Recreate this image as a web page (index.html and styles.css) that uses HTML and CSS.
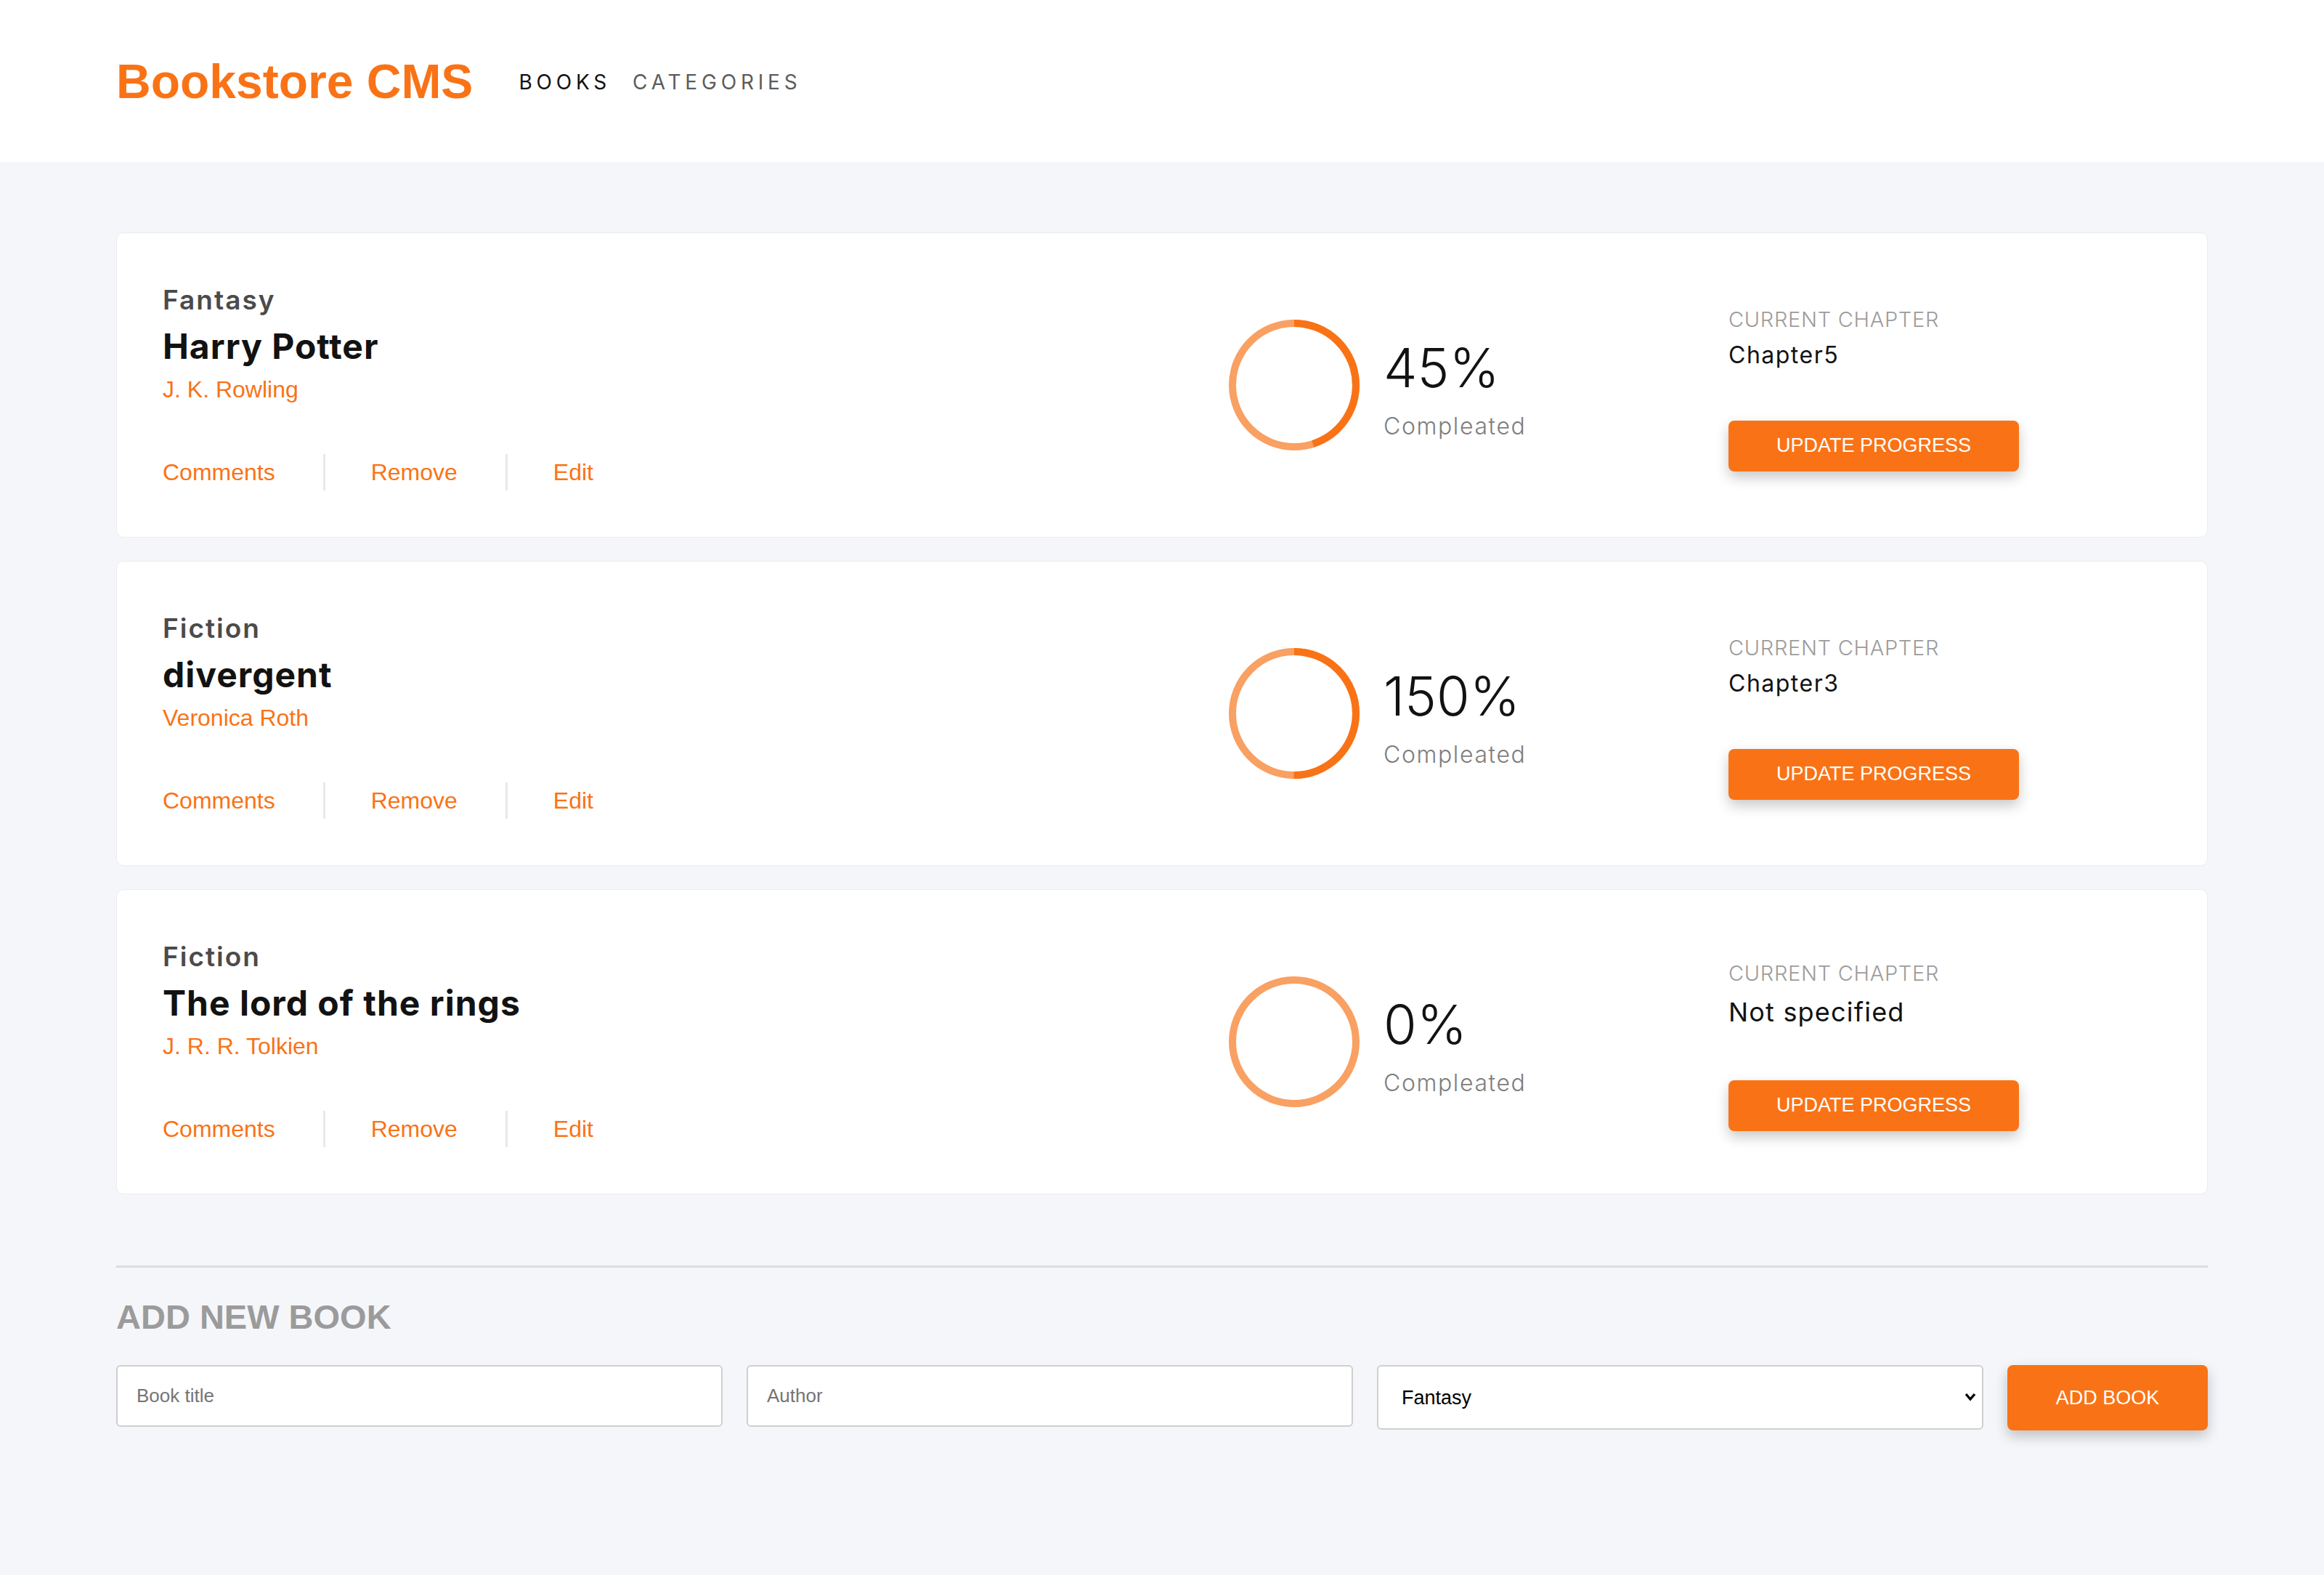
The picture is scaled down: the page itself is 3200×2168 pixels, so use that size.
FILE: index.html
```html
<!DOCTYPE html>
<html lang="en">
<head>
<meta charset="utf-8">
<title>Bookstore CMS</title>
<link rel="stylesheet" href="styles.css">
</head>
<body>
<header class="header">
  <div class="logo">Bookstore CMS</div>
  <nav class="nav">
    <a class="nav-link active">BOOKS</a>
    <a class="nav-link">CATEGORIES</a>
  </nav>
</header>
<main class="main">
  <ul class="books">
    <li class="card">
      <div class="info">
        <div class="category">Fantasy</div>
        <div class="title">Harry Potter</div>
        <div class="author">J. K. Rowling</div>
        <div class="actions">
          <a class="action">Comments</a>
          <a class="action">Remove</a>
          <a class="action">Edit</a>
        </div>
      </div>
      <div class="progress">
        <svg class="ring" width="180" height="180" viewBox="0 0 180 180">
          <circle class="ring-bg" cx="90" cy="90" r="85"/>
          <circle class="ring-fg" cx="90" cy="90" r="85" stroke-dasharray="240.33 534.07"/>
        </svg>
        <div class="pct">
          <div class="pct-value">45%</div>
          <div class="pct-label">Compleated</div>
        </div>
      </div>
      <div class="chapter">
        <div class="chapter-label">CURRENT CHAPTER</div>
        <div class="chapter-value">Chapter5</div>
        <button class="btn update">UPDATE PROGRESS</button>
      </div>
    </li>
    <li class="card">
      <div class="info">
        <div class="category">Fiction</div>
        <div class="title">divergent</div>
        <div class="author">Veronica Roth</div>
        <div class="actions">
          <a class="action">Comments</a>
          <a class="action">Remove</a>
          <a class="action">Edit</a>
        </div>
      </div>
      <div class="progress">
        <svg class="ring" width="180" height="180" viewBox="0 0 180 180">
          <circle class="ring-bg" cx="90" cy="90" r="85"/>
          <circle class="ring-fg" cx="90" cy="90" r="85" stroke-dasharray="267.04 534.07"/>
        </svg>
        <div class="pct">
          <div class="pct-value">150%</div>
          <div class="pct-label">Compleated</div>
        </div>
      </div>
      <div class="chapter">
        <div class="chapter-label">CURRENT CHAPTER</div>
        <div class="chapter-value">Chapter3</div>
        <button class="btn update">UPDATE PROGRESS</button>
      </div>
    </li>
    <li class="card">
      <div class="info">
        <div class="category">Fiction</div>
        <div class="title">The lord of the rings</div>
        <div class="author">J. R. R. Tolkien</div>
        <div class="actions">
          <a class="action">Comments</a>
          <a class="action">Remove</a>
          <a class="action">Edit</a>
        </div>
      </div>
      <div class="progress">
        <svg class="ring" width="180" height="180" viewBox="0 0 180 180">
          <circle class="ring-bg" cx="90" cy="90" r="85"/>
        </svg>
        <div class="pct">
          <div class="pct-value">0%</div>
          <div class="pct-label">Compleated</div>
        </div>
      </div>
      <div class="chapter">
        <div class="chapter-label">CURRENT CHAPTER</div>
        <div class="chapter-value big">Not specified</div>
        <button class="btn update">UPDATE PROGRESS</button>
      </div>
    </li>
  </ul>
  <section class="add">
    <h2 class="add-title">ADD NEW BOOK</h2>
    <form class="add-form">
      <input class="field" type="text" placeholder="Book title">
      <input class="field" type="text" placeholder="Author">
      <div class="select-wrap">
        <select class="field select">
          <option>Fantasy</option>
          <option>Fiction</option>
        </select>
        <svg class="chevron" width="16" height="12" viewBox="0 0 16 12">
          <path d="M2 2 L8 9 L14 2" fill="none" stroke="#000" stroke-width="3.4" stroke-linejoin="miter"/>
        </svg>
      </div>
      <button class="btn add-btn" type="button">ADD BOOK</button>
    </form>
  </section>
</main>
</body>
</html>
```
FILE: styles.css
```css
* { box-sizing: border-box; }

html, body {
  margin: 0;
  padding: 0;
}

body {
  background: #f5f6fa;
  font-family: "Inter", "Liberation Sans", sans-serif;
  color: #121212;
  min-height: 2168px;
}

.header {
  height: 223px;
  background: #ffffff;
  display: flex;
  align-items: center;
  padding: 0 160px;
  gap: 63px;
}

.logo {
  font-family: "Liberation Sans", Arial, sans-serif;
  font-weight: 700;
  font-size: 66px;
  line-height: 72px;
  color: #f97316;
}

.nav {
  display: flex;
  gap: 30px;
  margin-top: 3px;
}

.nav-link {
  font-family: "Inter", sans-serif;
  font-size: 28px;
  line-height: 36px;
  letter-spacing: 5.8px;
  color: #5c5c5c;
  font-weight: 400;
}

.nav-link.active { color: #121212; }

.main {
  padding: 97px 160px 0;
}

.books {
  list-style: none;
  margin: 0;
  padding: 0;
  display: flex;
  flex-direction: column;
  gap: 32px;
}

.card {
  background: #ffffff;
  border: 1px solid #ececef;
  border-radius: 10px;
  display: flex;
  padding: 63px 0 63px 63px;
  height: 420px;
}

.info {
  width: 1468px;
  display: flex;
  flex-direction: column;
}

.category {
  margin-top: 7px;
  font-size: 37px;
  line-height: 44px;
  font-weight: 600;
  color: #4b4b4b;
  letter-spacing: 2px;
}

.title {
  margin-top: 14px;
  font-size: 48px;
  line-height: 56px;
  font-weight: 700;
  color: #121212;
  letter-spacing: 1px;
}

.author {
  margin-top: 13px;
  font-family: "Liberation Sans", Arial, sans-serif;
  font-size: 32px;
  line-height: 36px;
  color: #f97316;
}

.actions {
  margin-top: 71px;
  display: flex;
}

.action {
  font-family: "Liberation Sans", Arial, sans-serif;
  font-size: 32px;
  line-height: 50px;
  color: #f97316;
  padding: 0 66px 0 63px;
  border-left: 3px solid #e8e8e8;
}

.action:first-child {
  padding-left: 0;
  border-left: none;
}

.progress {
  width: 688px;
  display: flex;
  align-items: center;
  gap: 33px;
}

.ring { flex: none; }

.ring-bg {
  fill: none;
  stroke: #f9a063;
  stroke-width: 10;
}

.ring-fg {
  fill: none;
  stroke: #f97316;
  stroke-width: 10;
  transform: rotate(-90deg);
  transform-origin: 90px 90px;
}

.pct {
  margin-top: 12px;
}

.pct-value {
  font-size: 74px;
  line-height: 80px;
  font-weight: 300;
  color: #121212;
}

.pct-label {
  margin-top: 21px;
  font-size: 32px;
  line-height: 40px;
  font-weight: 300;
  color: #7d7d7d;
  letter-spacing: 1.6px;
}

.chapter {
  flex: 1;
  display: flex;
  flex-direction: column;
  justify-content: center;
  align-items: flex-start;
  padding-top: 10px;
}

.chapter-label {
  font-size: 29px;
  line-height: 36px;
  font-weight: 300;
  color: #9c9c9c;
  letter-spacing: 0.7px;
}

.chapter-value {
  margin-top: 11px;
  font-size: 32px;
  line-height: 40px;
  color: #121212;
  letter-spacing: 1.5px;
}

.chapter-value.big {
  font-size: 36px;
  line-height: 48px;
  letter-spacing: 1.2px;
}

.btn {
  border: none;
  background: #f97316;
  color: #ffffff;
  font-family: "Liberation Sans", Arial, sans-serif;
  font-size: 27px;
  border-radius: 8px;
  box-shadow: 0 8px 18px rgba(0, 0, 0, 0.22);
  cursor: pointer;
}

.update {
  margin-top: 70px;
  width: 400px;
  height: 70px;
}

.add {
  margin-top: 98px;
  border-top: 3px solid #dcdde2;
}

.add-title {
  margin: 42px 0 0;
  font-family: "Liberation Sans", Arial, sans-serif;
  font-weight: 700;
  font-size: 47px;
  line-height: 52px;
  color: #9b9b9b;
}

.add-form {
  margin-top: 40px;
  display: grid;
  grid-template-columns: 1fr 1fr 1fr 276px;
  gap: 33px;
  align-items: start;
}

.field {
  width: 100%;
  height: 85px;
  border: 2px solid #cfcfcf;
  border-radius: 6px;
  background: #ffffff;
  padding: 0 26px;
  font-family: "Liberation Sans", Arial, sans-serif;
  font-size: 26px;
  color: #121212;
}

.field::placeholder { color: #757575; }

.select-wrap {
  position: relative;
}

.select {
  display: block;
  height: 89px;
  padding: 0 40px 0 32px;
  font-size: 27px;
  color: #000000;
  appearance: none;
  -webkit-appearance: none;
}

.chevron {
  position: absolute;
  right: 10px;
  top: 38px;
  pointer-events: none;
}

.add-btn {
  height: 90px;
  width: 276px;
}
```
